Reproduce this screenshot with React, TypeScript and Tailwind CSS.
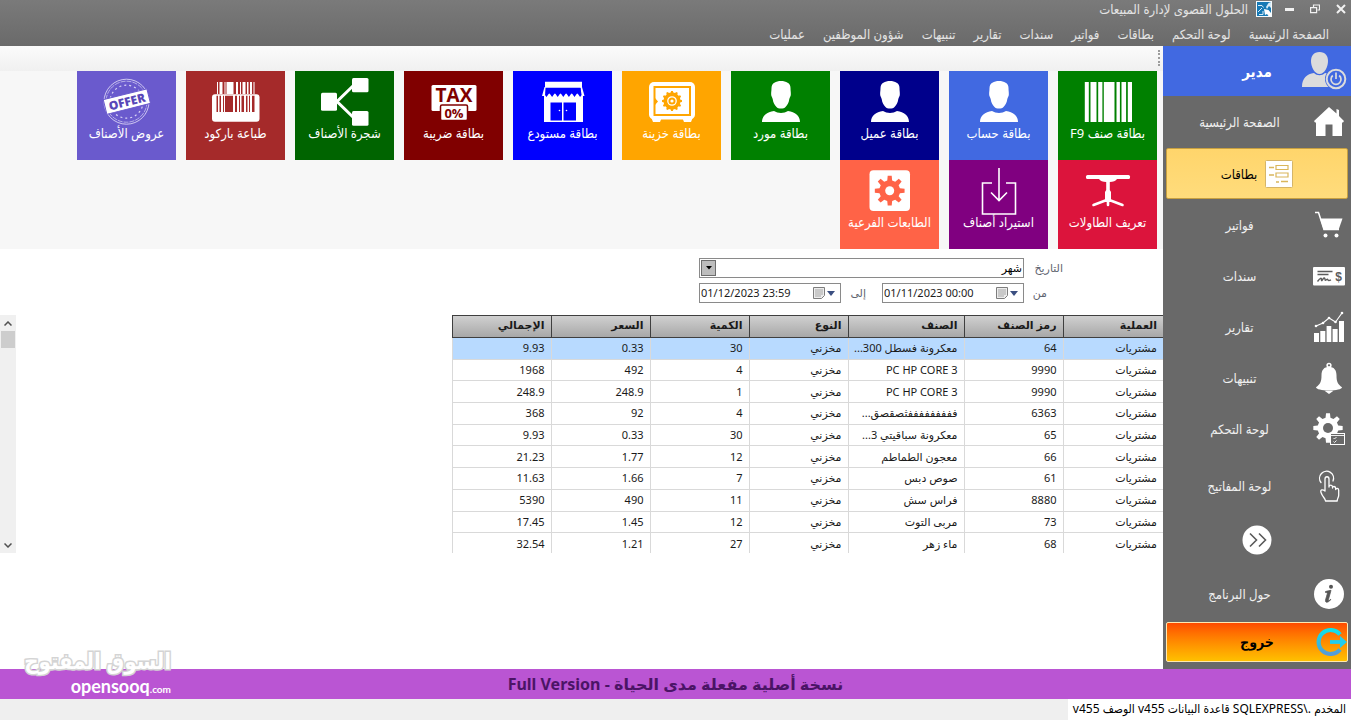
import type { ReactNode } from "react";

/* ---------- geometry helpers ---------- */

function gearPath(cx: number, cy: number, outer: number, inner: number, teeth: number) {
  const points: string[] = [];
  const step = (Math.PI * 2) / teeth;
  for (let i = 0; i < teeth; i++) {
    const a = i * step - Math.PI / 2;
    const spots: [number, number][] = [
      [a - step * 0.3, inner],
      [a - step * 0.17, outer],
      [a + step * 0.17, outer],
      [a + step * 0.3, inner],
    ];
    spots.forEach(([t, r]) => {
      points.push(`${(cx + Math.cos(t) * r).toFixed(2)} ${(cy + Math.sin(t) * r).toFixed(2)}`);
    });
  }
  return `M${points.join("L")}Z`;
}

/* ---------- tile icons ---------- */

function TileSvg({ children }: { children: ReactNode }) {
  return (
    <svg viewBox="0 0 48 48" className="h-12 w-12 shrink-0 overflow-visible" fill="#fff" aria-hidden="true">
      {children}
    </svg>
  );
}

function BarcodeIcon() {
  return (
    <TileSvg>
      <path d="M.8 4h4v40h-4zM6.5 4h6v40h-6zM14.2 4h4.2v40h-4.2zM19.8 4h10.7v40H19.8zM32.5 4h3.4v40h-3.4zM37.5 4h4.6v40h-4.6zM43.8 4H48v40h-4.2z" />
    </TileSvg>
  );
}

function PersonIcon() {
  return (
    <TileSvg>
      <path d="M24 3c5 0 9.500 2 9.500 7 0 3 .5 4 .3 7-.1 1.500-1.300 2.500-1.600 4.500-.3 3.500-2 5.500-3.700 7.500-1.600 2-7.400 2-9 0-1.700-2-3.400-4-3.700-7.500-.3-2-1.500-3-1.600-4.500-.2-3 .3-4 .3-7 0-5 4.500-7 9.500-7z" />
      <path d="M17 33c4 2.600 10 2.600 14 0 7 1.300 12 4.500 12 11H5c0-6.500 5-9.700 12-11z" />
    </TileSvg>
  );
}

function SafeIcon() {
  return (
    <TileSvg>
      <rect x="1" y="4" width="46" height="37.500" rx="5" />
      <path d="M3 39h11l-2 5H5zM34 39h11l-2 5h-7z" />
      <rect x="6.500" y="9" width="35.500" height="28" fill="none" stroke="#ffa500" strokeWidth="2" />
      <path d="M7 20l3 3.500-3 3.500z" fill="#ffa500" />
      <path d={gearPath(24, 23, 10, 8.5, 12)} fill="#ffa500" />
      <circle cx="24" cy="23" r="4.200" fill="none" stroke="#fff" strokeWidth="1.300" />
      <circle cx="24" cy="23" r="1.600" />
    </TileSvg>
  );
}

function StoreIcon() {
  return (
    <TileSvg>
      <path d="M6 3.700h37v6H6z" />
      <path d="M5.500 9L3 18h42.500L43 9h-1.500v6.500h-35V9z" />
      <path d="M5 17h39v27H5z" />
      <path d="M7 10l-1 7 1.500 2 2.800-4 2.800 4 2.800-4 2.800 4 2.800-4 2.800 4 2.800-4 2.800 4 2.800-4 2.800 4 2.800-4 2.800 4 1.500-2L41.500 10z" fill="#0000ff" />
      <path d="M11.500 24.500H23v18H11.500zM24.500 24.500H37v18H24.500z" fill="#0000ff" />
      <circle cx="20.500" cy="32.500" r=".8" />
      <circle cx="27.500" cy="32.500" r=".8" />
    </TileSvg>
  );
}

function TaxIcon() {
  return (
    <TileSvg>
      <rect x="1.500" y="7" width="45" height="26" rx="1.500" />
      <text x="24" y="23.500" textAnchor="middle" fontSize="19" fontWeight="700" fill="#800000" fontFamily="Open Sans, sans-serif">TAX</text>
      <rect x="10.500" y="27" width="27" height="15.500" rx="1.500" stroke="#800000" strokeWidth="1.500" />
      <text x="24" y="39.500" textAnchor="middle" fontSize="13" fontWeight="700" fill="#800000" fontFamily="Open Sans, sans-serif">0%</text>
    </TileSvg>
  );
}

function TreeIcon() {
  return (
    <TileSvg>
      <rect x="0" y="14.700" width="16" height="18" rx="1.500" />
      <rect x="31" y="0" width="16.500" height="14.300" rx="1.500" />
      <rect x="31" y="33" width="16.500" height="14.700" rx="1.500" />
      <path d="M34 6L16 23.500 34 41" fill="none" stroke="#fff" strokeWidth="3" />
    </TileSvg>
  );
}

function PrintBarcodeIcon() {
  return (
    <TileSvg>
      <rect x="0" y="16.300" width="47.500" height="27.400" rx="3" />
      <path d="M5 4h1v12H5zM7.500 4h3v12h-3zM12.500 4h1v12h-1zM14.500 4h7v12h-7zM24 4h2v12h-2zM28 4h1v12h-1zM30.500 4h3v12h-3zM35 4h1.500v12H35zM38 4h2v12h-2zM41.500 4h1v12h-1z" />
      <path d="M4.500 17.700H6V34H4.500zM7.500 17.700h1.500V34H7.500zM11 17.700h1V34h-1zM13 17.700h8V34h-8zM23 17.700h2V34h-2zM27 17.700h1V34h-1zM29.500 17.700h2.500V34h-2.500zM34 17.700h1.500V34H34zM37 17.700h1V34h-1zM40 17.700h2.500V34H40z" fill="#a52a2a" />
    </TileSvg>
  );
}

function OfferIcon() {
  return (
    <TileSvg>
      <g fill="none" stroke="#d9d4f4">
        <circle cx="23.500" cy="23.700" r="22.500" strokeWidth=".9" />
        <circle cx="23.500" cy="23.700" r="20.500" strokeWidth=".7" strokeDasharray="5 1" />
        <circle cx="23.500" cy="23.700" r="16.500" strokeWidth="1.200" strokeDasharray="2 3" />
      </g>
      <g transform="rotate(-14 24 24)">
        <rect x="1.500" y="16" width="45" height="15" stroke="#6a5acd" strokeWidth="1" />
        <text x="24" y="28" textAnchor="middle" fontSize="12" fontWeight="800" fill="#5847b8" fontFamily="Open Sans, sans-serif">OFFER</text>
      </g>
    </TileSvg>
  );
}

function TableIcon() {
  return (
    <TileSvg>
      <rect x="2" y="8" width="44" height="4" rx="1.500" />
      <path d="M15 12h18c-1 2-4 3-7.200 3v8l1.200 2v9h-6v-9l1.200-2v-8c-3.200 0-6.200-1-7.200-3z" />
      <path d="M24 32.500L9.500 38M24 32.500L38.500 38M24 31v7" fill="none" stroke="#fff" strokeWidth="2.600" strokeLinecap="round" />
    </TileSvg>
  );
}

function ImportIcon() {
  return (
    <TileSvg>
      <path d="M17 16H7.500v31h33V16H31M24 1v32M16 25.500l8 8 8-8" fill="none" stroke="#fff" strokeWidth="1.600" />
    </TileSvg>
  );
}

function SubPrinterIcon() {
  return (
    <TileSvg>
      <rect x="3.500" y="3.300" width="40.500" height="40.700" rx="4" />
      <path d={gearPath(23.7, 23.7, 15, 10.5, 8)} fill="#ff6347" />
      <circle cx="23.700" cy="23.700" r="4.500" />
    </TileSvg>
  );
}

/* ---------- sidebar icons ---------- */

function SideSvg({ children }: { children: ReactNode }) {
  return (
    <svg viewBox="0 0 32 32" className="h-8 w-8 shrink-0" fill="#fff" aria-hidden="true">
      {children}
    </svg>
  );
}

function HomeIcon() {
  return (
    <SideSvg>
      <path d="M16 1L1 15l1 1.500h1V30h9.500V18.500h7V30H29V16.500h1L31 15l-5-5V4l-2.500-1v4.500z" />
    </SideSvg>
  );
}

function CartIcon() {
  return (
    <SideSvg>
      <path d="M2 3.500h3.500l5.500 17h15" fill="none" stroke="#fff" strokeWidth="1.500" />
      <path d="M7 9.500h22.500L25.500 21H10.800z" />
      <circle cx="12.500" cy="26.500" r="2" />
      <circle cx="23.500" cy="26.500" r="2" />
    </SideSvg>
  );
}

function ChequeIcon() {
  return (
    <SideSvg>
      <rect x="0" y="7" width="32" height="18.500" rx="1" />
      <path d="M4.500 11.500h15M4.500 14.500h11" stroke="#5c5c5c" strokeWidth="1.400" />
      <path d="M4.500 21.500c3-4 4-4 4-1.500s2-3 3-2 0 3 1.500 2 1.500-1 2 0 1.500.5 3 0" fill="none" stroke="#5c5c5c" strokeWidth="1.400" />
      <text x="25.500" y="20.500" textAnchor="middle" fontSize="12" fontWeight="700" fill="#5c5c5c" fontFamily="Liberation Sans, sans-serif">$</text>
    </SideSvg>
  );
}

function ReportIcon() {
  return (
    <SideSvg>
      <path d="M1 22h5v9H1zM7.300 20h5v11h-5zM13.600 15h4.700v16h-4.700zM19.600 18h5v13h-5zM26 10h5v21h-5z" />
      <path d="M3 15l7-3 6-5 6.500 4L29 2" fill="none" stroke="#fff" strokeWidth="1.100" />
      <circle cx="3" cy="15" r="1.300" />
      <circle cx="10" cy="12" r="1.300" />
      <circle cx="16" cy="7" r="1.300" />
      <circle cx="22.500" cy="11" r="1.300" />
      <circle cx="29" cy="2" r="1.300" />
    </SideSvg>
  );
}

function BellIcon() {
  return (
    <SideSvg>
      <circle cx="16" cy="3.300" r="1.900" fill="none" stroke="#fff" strokeWidth="1.500" />
      <path d="M16 4.800c5 0 7.500 3.500 7.500 8.500 0 7 1.500 9 5.500 12 0 2-6 3.200-13 3.200S3 27.300 3 25.300c4-3 5.500-5 5.500-12 0-5 2.500-8.500 7.500-8.500z" />
      <path d="M11.500 28.700h9L16 32z" />
    </SideSvg>
  );
}

function ControlIcon() {
  return (
    <SideSvg>
      <path d={gearPath(15, 15, 14.8, 10.5, 8)} />
      <circle cx="15" cy="15" r="5" fill="#696969" />
      <rect x="17.500" y="20.500" width="14" height="11" fill="#696969" stroke="#fff" strokeWidth="1" />
      <path d="M18 22.500h13M20.500 25l1 1 2-2M20.500 28.500l1 1 2-2" fill="none" stroke="#fff" strokeWidth=".9" />
    </SideSvg>
  );
}

function TouchIcon() {
  return (
    <SideSvg>
      <g fill="none" stroke="#fff" strokeWidth="1.300" strokeLinejoin="round" strokeLinecap="round">
        <path d="M8 12.500a7 7 0 1 1 12-1.500" />
        <path d="M12 21V9c0-3 4-3 4 0v8c0-2.500 3.500-2.500 3.500 0v1c0-2.200 3.200-2 3.200.5v1c.5-1.800 3-1.400 3 .8V25c0 3-1.500 3-1.500 6H12.500c0-2.500-3-4-4.500-8.500-1-3 1.500-3.500 4-1.500z" />
      </g>
    </SideSvg>
  );
}

function InfoIcon() {
  return (
    <SideSvg>
      <circle cx="16" cy="16" r="15" />
      <circle cx="18" cy="8.700" r="2" fill="#555" />
      <path d="M12.500 13.500c2-.4 3.500-.9 5.500-1.200l-2.600 9.400c-.3 1.300.6 1.200 2.400-.5-1 2.600-5.600 4.600-5.300 1.200.1-1.200 1.800-6 1.800-7.200 0-.7-.8-.8-1.800-.7z" fill="#555" stroke="#555" strokeWidth=".8" />
    </SideSvg>
  );
}

function ManagerIcon() {
  return (
    <svg viewBox="0 0 46 40" className="h-10 w-[46px] shrink-0" fill="#dcdcdc" aria-hidden="true">
      <path d="M18.500 1c6 0 8.500 4 8.500 9 0 6-3.500 13-8.500 13S10 16 10 10c0-5 2.500-9 8.500-9z" />
      <path d="M13 22c3 3 8 3 11 0 7 1 11 5 11 14H1c0-9 5-13 12-14z" />
      <circle cx="35" cy="28" r="11" fill="#4169e1" />
      <circle cx="35" cy="28" r="9.300" fill="none" stroke="#dcdcdc" strokeWidth="2" />
      <path d="M31.800 24.500a5 5 0 1 0 6.400 0M35 21.500v6.500" fill="none" stroke="#dcdcdc" strokeWidth="1.700" />
    </svg>
  );
}

function CardsIcon() {
  return (
    <svg viewBox="0 0 28 28" className="h-7 w-7 shrink-0" fill="none" aria-hidden="true">
      <rect x=".5" y=".5" width="27" height="27" rx="1" fill="#fff" stroke="#d5b568" />
      <path d="M4 7.500h5M4 15h5M11 22h3M16 21.500h7" stroke="#d9b65c" strokeWidth="1.300" />
      <path d="M11 5.500h12v4H11zM11 13h12v4H11z" stroke="#d9b65c" strokeWidth="1.200" />
    </svg>
  );
}

function ExitIcon() {
  return (
    <svg viewBox="0 0 32 30" className="h-[30px] w-8 shrink-0" fill="none" aria-hidden="true">
      <defs>
        <linearGradient id="exit-ring" x1="0" y1="0" x2="0" y2="1">
          <stop offset="0" stopColor="#10e0e8" />
          <stop offset="1" stopColor="#559bd8" />
        </linearGradient>
      </defs>
      <path d="M25 7.500A12 12 0 1 0 25 22.500" stroke="url(#exit-ring)" strokeWidth="4.200" />
      <path d="M15 15h11" stroke="#22cdee" strokeWidth="3.800" />
      <path d="M25 9l7 6-7 6z" fill="#22cdee" />
    </svg>
  );
}

function AppIcon() {
  return (
    <svg viewBox="0 0 16 16" className="h-4 w-4" fill="none" aria-hidden="true">
      <rect width="16" height="16" fill="#f4fafd" />
      <rect x="1" y="1" width="14" height="14" fill="#1679b5" />
      <path d="M2 4.500h4l1.500 2M2 11l4-4M3 13.500h4V10" stroke="#d6ecf8" strokeWidth="1" />
      <path d="M15 1v6l-2-2-2 3-1-2 2.500-4z" fill="#d6ecf8" />
      <path d="M8 8l1 6 2-1 1.500 2H15v-3l-2.500-3z" fill="#fff" />
    </svg>
  );
}

/* ---------- data ---------- */

const menu = ["الصفحة الرئيسية", "لوحة التحكم", "بطاقات", "فواتير", "سندات", "تقارير", "تنبيهات", "شؤون الموظفين", "عمليات"];

const tiles = [
  { label: "بطاقة صنف F9", color: "bg-[#008000]", icon: <BarcodeIcon /> },
  { label: "بطاقة حساب", color: "bg-[#4169e1]", icon: <PersonIcon /> },
  { label: "بطاقة عميل", color: "bg-[#00008b]", icon: <PersonIcon /> },
  { label: "بطاقة مورد", color: "bg-[#008000]", icon: <PersonIcon /> },
  { label: "بطاقة خزينة", color: "bg-[#ffa500]", icon: <SafeIcon /> },
  { label: "بطاقة مستودع", color: "bg-[#0000ff]", icon: <StoreIcon /> },
  { label: "بطاقة ضريبة", color: "bg-[#800000]", icon: <TaxIcon /> },
  { label: "شجرة الأصناف", color: "bg-[#006400]", icon: <TreeIcon /> },
  { label: "طباعة باركود", color: "bg-[#a52a2a]", icon: <PrintBarcodeIcon /> },
  { label: "عروض الأصناف", color: "bg-[#6a5acd]", icon: <OfferIcon /> },
  { label: "تعريف الطاولات", color: "bg-[#dc143c]", icon: <TableIcon /> },
  { label: "استيراد أصناف", color: "bg-[#800080]", icon: <ImportIcon /> },
  { label: "الطابعات الفرعية", color: "bg-[#ff6347]", icon: <SubPrinterIcon /> },
];

const sideItems = [
  { label: "فواتير", icon: <CartIcon /> },
  { label: "سندات", icon: <ChequeIcon /> },
  { label: "تقارير", icon: <ReportIcon /> },
  { label: "تنبيهات", icon: <BellIcon /> },
  { label: "لوحة التحكم", icon: <ControlIcon /> },
];

const columns = [
  { title: "العملية", width: "w-[100px]" },
  { title: "رمز الصنف", width: "w-[99px]" },
  { title: "الصنف", width: "w-[116px]" },
  { title: "النوع", width: "w-[99px]" },
  { title: "الكمية", width: "w-[99px]" },
  { title: "السعر", width: "w-[99px]" },
  { title: "الإجمالي", width: "w-[99px]" },
];

const rows = [
  ["مشتريات", "64", "معكرونة فسطل 300...", "مخزني", "30", "0.33", "9.93"],
  ["مشتريات", "9990", "PC HP CORE 3", "مخزني", "4", "492", "1968"],
  ["مشتريات", "9990", "PC HP CORE 3", "مخزني", "1", "248.9", "248.9"],
  ["مشتريات", "6363", "فففففففففثصقصق...", "مخزني", "4", "92", "368"],
  ["مشتريات", "65", "معكرونة سباقيتي 3...", "مخزني", "30", "0.33", "9.93"],
  ["مشتريات", "66", "معجون الطماطم", "مخزني", "12", "1.77", "21.23"],
  ["مشتريات", "61", "صوص دبس", "مخزني", "7", "1.66", "11.63"],
  ["مشتريات", "8880", "فراس سش", "مخزني", "11", "490", "5390"],
  ["مشتريات", "73", "مربى التوت", "مخزني", "12", "1.45", "17.45"],
  ["مشتريات", "68", "ماء زهر", "مخزني", "27", "1.21", "32.54"],
];

/* ---------- page parts ---------- */

function TopBar() {
  return (
    <header className="h-[46px] bg-linear-to-b from-[#7a7a7a] to-[#6a6a6a] text-[#e4e4e4]">
      <div className="flex h-[18px] items-center pr-1">
        <div className="flex items-center gap-[14px]">
          <button type="button" aria-label="إغلاق" className="flex h-4 w-3 items-center justify-center">
            <svg viewBox="0 0 10 10" className="h-[10px] w-[10px]" stroke="#f2f2f2" strokeWidth="2"><path d="M1 1l8 8M9 1L1 9" /></svg>
          </button>
          <button type="button" aria-label="استعادة" className="flex h-4 w-3 items-center justify-center">
            <svg viewBox="0 0 10 10" className="h-[10px] w-[10px]" fill="none" stroke="#f2f2f2" strokeWidth="1.200"><path d="M3.500 3V1h6v5h-2M.6 3.600h6v5h-6z" /></svg>
          </button>
          <button type="button" aria-label="تصغير" className="flex h-4 w-3 items-center justify-center">
            <span className="h-[3px] w-[9px] bg-[#f2f2f2]" />
          </button>
        </div>
        <div className="mr-[11px] flex items-center gap-2">
          <AppIcon />
          <h1 className="text-[13px] leading-4">الحلول القصوى لإدارة المبيعات</h1>
        </div>
      </div>
      <nav className="flex h-7 items-center gap-[18px] pr-[22px] pt-1">
        {menu.map((item) => (
          <a key={item} href="#" className="text-[13px] leading-4 whitespace-nowrap">{item}</a>
        ))}
      </nav>
    </header>
  );
}

function SideRow({ label, icon, height }: { label: string; icon: ReactNode; height: string }) {
  return (
    <button type="button" className={`flex w-full items-center pr-[6px] pl-[3px] text-[#f0f0f0] ${height}`}>
      {icon}
      <span className="flex-1 text-center text-[13px] leading-4">{label}</span>
    </button>
  );
}

function Sidebar() {
  return (
    <aside className="flex w-[188px] shrink-0 flex-col bg-[#696969]">
      <button type="button" className="grid h-[50px] w-full grid-cols-[46px_1fr_46px] items-center bg-[#4169e1] px-1 text-white">
        <ManagerIcon />
        <span className="text-center text-[15px] leading-5 font-bold">مدير</span>
      </button>
      <SideRow label="الصفحة الرئيسية" icon={<HomeIcon />} height="h-[52px]" />
      <button type="button" className="mx-[3px] flex h-[51px] items-center justify-center gap-2 rounded-xs border border-[#c8a040] bg-linear-to-b from-[#ffd56b] to-[#ffdc7c] text-black">
        <CardsIcon />
        <span className="text-[13px] leading-4">بطاقات</span>
      </button>
      {sideItems.map((item) => (
        <SideRow key={item.label} {...item} height="h-[51px]" />
      ))}
      <div className="pt-[5px]">
        <SideRow label="لوحة المفاتيح" icon={<TouchIcon />} height="h-[54px]" />
        <button type="button" aria-label="المزيد" className="flex h-[54px] w-full items-center justify-center">
          <svg viewBox="0 0 30 30" className="h-[30px] w-[30px]" fill="none">
            <circle cx="15" cy="15" r="14.500" fill="#fff" />
            <path d="M8 8.500l6.500 6.500L8 21.500M17 8.500l6.500 6.500-6.500 6.500" stroke="#5a5a5a" strokeWidth="1.600" />
          </svg>
        </button>
        <SideRow label="حول البرنامج" icon={<InfoIcon />} height="h-[54px]" />
      </div>
      <button type="button" className="mx-[3px] mt-px mb-[6px] grid h-10 grid-cols-[32px_1fr_32px] items-center rounded-xs border border-[#ffe9b0] bg-linear-to-b from-[#ff4a00] to-[#ffc000] text-black">
        <ExitIcon />
        <span className="text-center text-sm leading-5 font-bold">خروج</span>
      </button>
    </aside>
  );
}

function Ribbon() {
  return (
    <section className="bg-[#f7f7f7]">
      <div className="flex h-[25px] bg-linear-to-b from-[#fbfbfb] to-[#f0f0f0] pt-1 pr-[3px]">
        <div className="h-4 border-r-2 border-dotted border-[#9c9c9c]" />
      </div>
      <div className="flex flex-wrap gap-x-[10px] pr-[6px]">
        {tiles.map((tile) => (
          <button key={tile.label} type="button" className={`flex h-[89px] w-[99px] flex-col items-center pt-[7px] text-white ${tile.color}`}>
            {tile.icon}
            <span className="text-[13px] leading-[14px] whitespace-nowrap">{tile.label}</span>
          </button>
        ))}
      </div>
    </section>
  );
}

function DateBox({ id, value }: { id: string; value: string }) {
  return (
    <div dir="ltr" className="flex h-5 items-center border border-[#8a8a8a] bg-white pr-[5px]">
      <input id={id} type="text" defaultValue={value} className="min-w-0 flex-1 pl-px text-[11px] leading-4 text-[#1c1c1c] outline-none" />
      <button type="button" aria-label="اختيار التاريخ" className="flex items-center gap-[2px]">
        <svg viewBox="0 0 12 12" className="h-3 w-3" fill="none">
          <path d="M.5.5h11v8l-3 3h-8z" fill="#ececec" stroke="#7d7d7d" />
          <path d="M2 3h8M2 5h8M2 7h8M2 9h6M3 2v8M5 2v8M7 2v8M9 2v6" stroke="#a9a9a9" strokeWidth=".6" />
        </svg>
        <svg viewBox="0 0 8 5" className="h-[5px] w-2"><path d="M0 0h8L4 5z" fill="#3b4f81" /></svg>
      </button>
    </div>
  );
}

function Filters() {
  return (
    <form className="mr-[100px] grid w-max grid-cols-[39px_142px_41px_142px] items-center gap-y-[5px] pt-[9px] font-['Noto_Sans','DejaVu_Sans',sans-serif] text-[11px] leading-4 text-[#5f6470]">
      <label htmlFor="period">التاريخ</label>
      <div className="relative col-span-3">
        <select id="period" defaultValue="month" className="block h-5 w-full appearance-none border border-[#8a8a8a] bg-white pr-px text-black outline-none">
          <option value="month">شهر</option>
        </select>
        <span className="pointer-events-none absolute top-[2px] left-[2px] flex h-4 w-[15px] items-center justify-center border border-[#6d6d6d] bg-[#bdbdbd]">
          <svg viewBox="0 0 6 4" className="h-1 w-[6px]"><path d="M0 0h6L3 3.500z" /></svg>
        </span>
      </div>
      <label htmlFor="from" className="pr-4">من</label>
      <DateBox id="from" value="01/11/2023 00:00" />
      <label htmlFor="to" className="pr-4">إلى</label>
      <DateBox id="to" value="01/12/2023 23:59" />
    </form>
  );
}

function Operations() {
  return (
    <div className="mt-3 flex h-[238px] justify-between overflow-hidden">
      <table className="h-[240px] w-[711px] table-fixed border-collapse font-['Noto_Sans','DejaVu_Sans',sans-serif] text-[11px] leading-4 text-[#1a1a1a]">
        <thead>
          <tr className="h-[22px] bg-linear-to-b from-[#d0d0d0] to-[#a6a6a6]">
            {columns.map((c) => (
              <th key={c.title} className={`border border-r-0 border-[#3f3f3f] pr-[6px] pb-[3px] text-right font-bold ${c.width}`}>{c.title}</th>
            ))}
          </tr>
        </thead>
        <tbody>
          {rows.map((row, r) => (
            <tr key={r} className={r === 0 ? "bg-[#b8daff]" : "bg-white"}>
              {row.map((cell, c) => (
                <td key={c} className="overflow-hidden border border-r-0 border-[#d9d9d9] pr-[6px] text-right whitespace-nowrap">{cell}</td>
              ))}
            </tr>
          ))}
        </tbody>
      </table>
      <div className="flex w-4 flex-col bg-[#f0f0f0]">
        <button type="button" aria-label="أعلى" className="flex h-4 items-center justify-center">
          <svg viewBox="0 0 8 5" className="h-[5px] w-2" fill="none" stroke="#505050" strokeWidth="1.500"><path d="M.5 4.500L4 1l3.500 3.500" /></svg>
        </button>
        <div className="mx-px h-[17px] bg-[#cdcdcd]" />
        <button type="button" aria-label="أسفل" className="mt-auto flex h-4 items-center justify-center">
          <svg viewBox="0 0 8 5" className="h-[5px] w-2" fill="none" stroke="#505050" strokeWidth="1.500"><path d="M.5.5L4 4 7.500.5" /></svg>
        </button>
      </div>
    </div>
  );
}

function Watermark() {
  return (
    <div className="pointer-events-none absolute bottom-0 left-6 flex w-[147px] flex-col items-end text-white" dir="ltr">
      <span dir="rtl" className="text-[22px] leading-8 font-bold whitespace-nowrap [-webkit-text-stroke:3px_#d4d4d4] [paint-order:stroke_fill]">السوق المفتوح</span>
      <span className="font-[Lato,sans-serif] text-[18px] leading-5 font-bold">
        opensooq<span className="text-[10px]">.com</span>
      </span>
    </div>
  );
}

export default function App() {
  return (
    <div dir="rtl" className="flex min-h-screen flex-col bg-white font-['Noto_Sans','DejaVu_Sans_Condensed','DejaVu_Sans',sans-serif]">
      <TopBar />
      <div className="flex flex-1">
        <Sidebar />
        <main className="min-w-0 flex-1">
          <Ribbon />
          <Filters />
          <Operations />
        </main>
      </div>
      <div className="relative flex h-[30px] items-center justify-center bg-[#ba55d3]">
        <p className="font-['Noto_Sans','DejaVu_Sans',sans-serif] text-base leading-6 font-bold text-[#4b1466]">نسخة أصلية مفعلة مدى الحياة - Full Version</p>
        <Watermark />
      </div>
      <footer className="flex h-[21px] bg-[#efefef]">
        <p className="bg-white px-[5px] text-xs leading-5 text-black">المخدم .\SQLEXPRESS قاعدة البيانات v455 الوصف v455</p>
      </footer>
    </div>
  );
}
